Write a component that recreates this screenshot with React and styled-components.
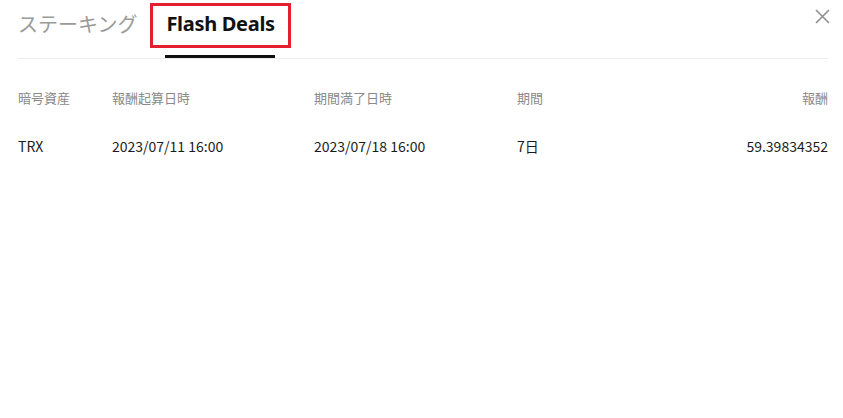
import React from "react"
import styled, { createGlobalStyle } from "styled-components"

const GlobalStyle = createGlobalStyle`
    body {
        margin: 0;
        background: #fff;
        font-family: "Noto Sans", "Noto Sans CJK JP", sans-serif;
    }
`

const Panel = styled.div`
    padding: 0 15px 0 18px;
`

const Header = styled.div`
    display: flex;
    align-items: flex-start;
    border-bottom: 1px solid #ececec;
`

const Tabs = styled.div`
    display: flex;
    gap: 29px;
    flex: 1;
`

const Tab = styled.div`
    position: relative;
    padding: 10px 0 20px;
    font-size: 20px;
    line-height: 28px;
    font-weight: ${props => props.active ? 700 : 400};
    color: ${props => props.active ? "#111" : "#9a9a9a"};
    font-family: ${props => props.active ? '"Noto Sans", sans-serif' : '"Noto Sans CJK JP", sans-serif'};
    letter-spacing: ${props => props.active ? "-0.3px" : "0"};
    &::after {
        content: "";
        display: ${props => props.active ? "block" : "none"};
        position: absolute;
        left: -1px;
        right: 0;
        bottom: 0;
        height: 3px;
        background: #111;
    }
`

const Highlight = styled.span`
    position: absolute;
    left: -16px;
    right: -16px;
    top: 3px;
    height: 45px;
    border: 3px solid #e5202e;
    box-sizing: border-box;
    pointer-events: none;
`

const CloseButton = styled.button`
    margin: 8px -3px 0 0;
    padding: 0;
    width: 17px;
    height: 17px;
    border: 0;
    background: none;
    cursor: pointer;
    display: flex;
`

const Table = styled.div`
    margin-top: 14px;
`

const Row = styled.div`
    display: grid;
    grid-template-columns: 94px 202px 203px 1fr auto;
    height: ${props => props.head ? "49px" : "47px"};
    align-items: center;
    font-size: ${props => props.head ? "13px" : "14px"};
    color: ${props => props.head ? "#8a8a8a" : "#1c1c1c"};
    font-family: "Noto Sans CJK JP", sans-serif;
`

const Cell = styled.div`
    text-align: ${props => props.right ? "right" : "left"};
    white-space: nowrap;
`

const rows = [
    { asset: "TRX", start: "2023/07/11 16:00", end: "2023/07/18 16:00", term: "7日", reward: "59.39834352" }
]

const App = () => {
    return (
        <Panel>
            <GlobalStyle />
            <Header>
                <Tabs>
                    <Tab>ステーキング</Tab>
                    <Tab active>
                        Flash Deals
                        <Highlight />
                    </Tab>
                </Tabs>
                <CloseButton aria-label="close">
                    <svg width="17" height="17" viewBox="0 0 17 17">
                        <path d="M2 2 L15 15 M15 2 L2 15" stroke="#8f8f8f" strokeWidth="1.6" fill="none" />
                    </svg>
                </CloseButton>
            </Header>
            <Table>
                <Row head>
                    <Cell>暗号資産</Cell>
                    <Cell>報酬起算日時</Cell>
                    <Cell>期間満了日時</Cell>
                    <Cell>期間</Cell>
                    <Cell right>報酬</Cell>
                </Row>
                {rows.map((r, index) => (
                    <Row key={index}>
                        <Cell>{r.asset}</Cell>
                        <Cell>{r.start}</Cell>
                        <Cell>{r.end}</Cell>
                        <Cell>{r.term}</Cell>
                        <Cell right>{r.reward}</Cell>
                    </Row>
                ))}
            </Table>
        </Panel>
    )
}

export default App
